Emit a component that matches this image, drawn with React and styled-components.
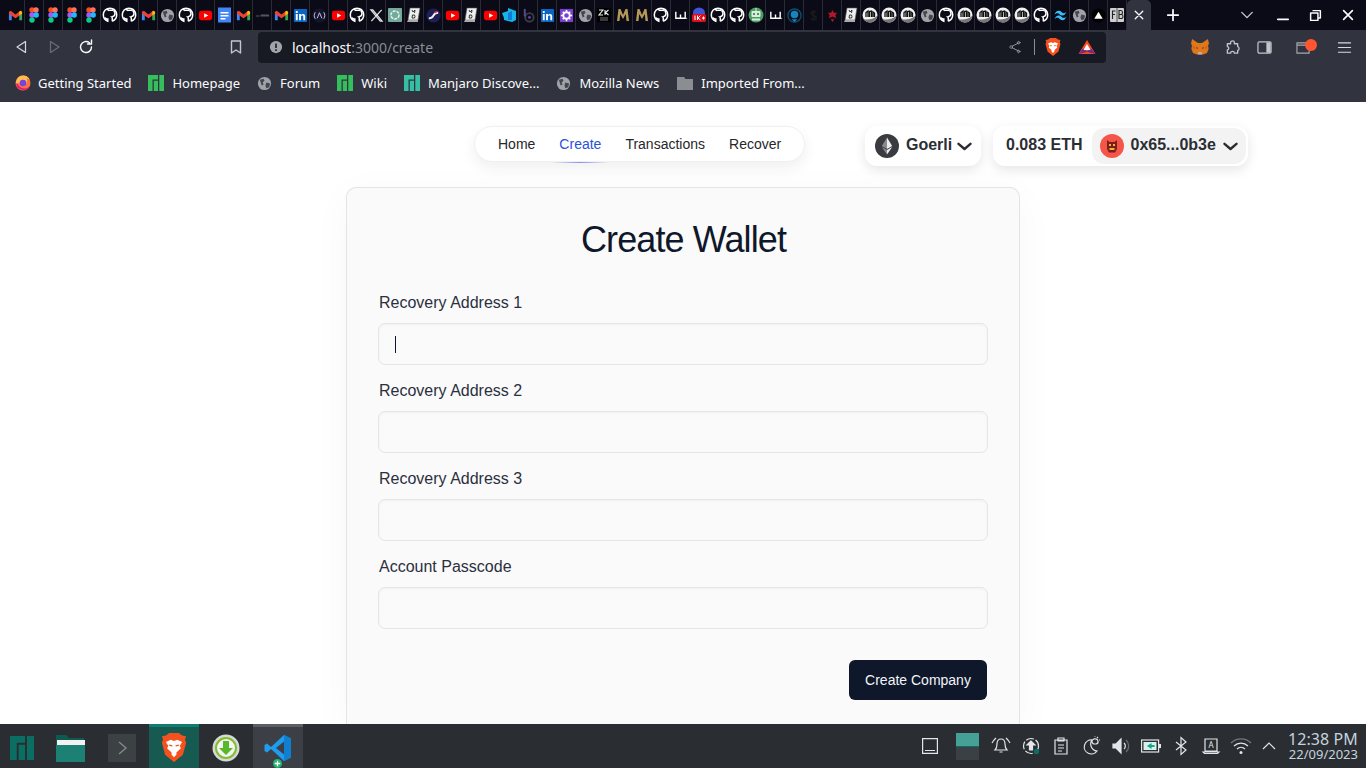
import React from 'react';
import styled, { createGlobalStyle } from 'styled-components';

const GlobalStyle = createGlobalStyle`
html, body {
  margin: 0;
  padding: 0;
  height: 768px;
  overflow: hidden;
  background: #fff;
  font-family: "Liberation Sans", Arial, sans-serif;
}
* { box-sizing: border-box; }
`;

const Screen = styled.div`
width: 1366px;
height: 768px;
display: flex;
flex-direction: column;
overflow: hidden;
`;

/* ---------- browser chrome ---------- */
const TabStrip = styled.div`
height: 30px;
flex: none;
background: #0b0b18;
display: flex;
padding-left: 6px;
`;
const TabSlot = styled.div`
width: 19px;
height: 30px;
flex: none;
display: flex;
align-items: center;
justify-content: center;
border-right: 1px solid #2b2b36;
`;
const ActiveTab = styled.div`
width: 24px;
height: 30px;
flex: none;
background: #31343f;
border-radius: 5px 5px 0 0;
display: flex;
align-items: center;
justify-content: center;
`;
const WinButton = styled.div`
position: absolute;
top: 0;
left: ${(p) => p.$x}px;
width: 30px;
height: 30px;
display: flex;
align-items: center;
justify-content: center;
`;
const TabStripEnd = styled.div`
position: relative;
flex: 1;
`;
const Toolbar = styled.div`
height: 34px;
flex: none;
background: #31343f;
display: flex;
align-items: center;
padding-left: 6px;
`;
const ToolBtn = styled.div`
position: relative;
width: 32px;
height: 32px;
flex: none;
display: flex;
align-items: center;
justify-content: center;
margin-left: ${(p) => p.$ml || 0}px;
`;
const UrlBar = styled.div`
width: 848px;
height: 31px;
margin-left: 6px;
flex: none;
background: #171923;
border-radius: 4px;
display: flex;
align-items: center;
padding: 0 10px 0 11px;
font-family: "Noto Sans", sans-serif;
font-size: 14px;
color: #fbfbfe;
`;
const UrlText = styled.div`
margin-left: 9px;
flex: 1;
`;
const UrlPort = styled.span`
color: #8b8c94;
`;
const UrlDivider = styled.div`
width: 1px;
height: 16px;
background: #8b8c94;
margin: 0 10px 0 11px;
`;
const UrlIconGap = styled.div`
width: 17px;
`;
const Badge = styled.div`
position: absolute;
top: 8px;
right: 2px;
width: 12px;
height: 12px;
border-radius: 50%;
background: #ff5630;
`;
const BookmarkBar = styled.div`
height: 38px;
flex: none;
background: #31343f;
display: flex;
align-items: center;
padding-left: 15px;
gap: 17px;
font-family: "Noto Sans", sans-serif;
font-size: 13px;
color: #fbfbfe;
`;
const Bookmark = styled.div`
display: flex;
align-items: center;
gap: ${(p) => p.$gap}px;
white-space: nowrap;
`;

/* ---------- page ---------- */
const Page = styled.div`
flex: 1;
min-height: 0;
background: #fff;
overflow: hidden;
display: flex;
flex-direction: column;
`;
const Header = styled.div`
display: flex;
align-items: flex-start;
padding: 24px 0 0 474px;
height: 85px;
flex: none;
`;
const NavPill = styled.nav`
position: relative;
width: 331px;
height: 36px;
background: #fff;
border: 1px solid #f0f0f2;
border-radius: 18px;
box-shadow: 0 6px 14px rgba(39, 39, 42, 0.07);
display: flex;
align-items: center;
padding-left: 11px;
font-size: 14px;
`;
const NavItem = styled.a`
position: relative;
padding: 0 12px;
line-height: 36px;
color: ${(p) => (p.$active ? '#2b50d8' : '#27272a')};
&::after {
  content: ${(p) => (p.$active ? '""' : 'none')};
  position: absolute;
  left: 4px;
  right: 4px;
  bottom: -1px;
  height: 1px;
  background: linear-gradient(90deg, rgba(60, 90, 220, 0), rgba(60, 90, 220, 0.6), rgba(60, 90, 220, 0));
}
`;
const Chip = styled.div`
height: 40px;
margin-left: ${(p) => p.$ml}px;
width: ${(p) => p.$w}px;
padding-left: ${(p) => p.$pl || 0}px;
background: #fff;
border-radius: 12px;
box-shadow: 0 4px 12px rgba(0, 0, 0, 0.1);
display: flex;
align-items: center;
font-size: 16px;
font-weight: 700;
color: #2a2e33;
white-space: nowrap;
`;
const ChainName = styled.span`
margin: 0 0 2px 7px;
`;
const Balance = styled.span`
margin: 0 0 2px 13px;
`;
const AccountBox = styled.div`
margin-left: 10px;
width: 154px;
height: 36px;
border-radius: 12px;
background: #f3f3f4;
display: flex;
align-items: center;
padding-left: 8px;
`;
const AccountName = styled.span`
margin: 0 0 2px 6px;
`;
const CaretWrap = styled.span`
margin-left: ${(p) => p.$ml}px;
flex: none;
`;

const Card = styled.div`
width: 674px;
flex: 1;
margin-left: 346px;
background: #fafafa;
border: 1px solid #e4e4e7;
border-bottom: none;
border-radius: 10px 10px 0 0;
box-shadow: 0 8px 40px rgba(0, 0, 0, 0.035);
padding: 30px 31px 0 32px;
`;
const Title = styled.h1`
margin: 0 0 28px;
height: 44px;
line-height: 44px;
text-align: center;
font-size: 36px;
font-weight: 400;
letter-spacing: -0.9px;
color: #0f172a;
`;
const Field = styled.div`
height: 88px;
`;
const Label = styled.label`
display: block;
height: 28px;
line-height: 26px;
margin-bottom: 5px;
font-size: 16px;
color: #2a3040;
`;
const InputBox = styled.div`
height: 42px;
width: 610px;
margin-left: -1px;
background: #fafafa;
border: 1px solid #e6e6e8;
border-radius: 7px;
box-shadow: inset 0 1px 3px rgba(0, 0, 0, 0.04);
display: flex;
align-items: center;
padding-left: 16px;
`;
const TextCaret = styled.div`
width: 1px;
height: 17px;
background: #0f172a;
`;
const Actions = styled.div`
display: flex;
justify-content: flex-end;
margin: 18px 1px 0 0;
`;
const SubmitButton = styled.button`
width: 138px;
height: 40px;
border: none;
border-radius: 6px;
background: #0f172a;
color: #f1f5f9;
font-family: "Liberation Sans", Arial, sans-serif;
font-size: 14px;
`;

/* ---------- taskbar ---------- */
const Taskbar = styled.div`
height: 44px;
flex: none;
background: #2a2e32;
display: flex;
align-items: stretch;
`;
const TaskItem = styled.div`
width: 50px;
flex: none;
margin-left: ${(p) => p.$ml || 0}px;
display: flex;
align-items: center;
justify-content: center;
background: ${(p) => p.$bg || 'transparent'};
border-top: 3px solid ${(p) => p.$bar || 'transparent'};
`;
const LaunchIcon = styled.div`
position: relative;
width: 28px;
height: 28px;
`;
const AddBadge = styled.div`
position: absolute;
left: 9px;
bottom: -6px;
`;
const Tray = styled.div`
margin-left: auto;
display: flex;
align-items: center;
`;
const TrayItem = styled.div`
width: ${(p) => p.$w || 30}px;
height: 44px;
display: flex;
align-items: center;
justify-content: center;
`;
const Pager = styled.div`
width: 23px;
height: 27px;
margin: 0 7px 0 16px;
display: flex;
flex-direction: column;
`;
const PagerDesk = styled.div`
flex: 1;
background: ${(p) => (p.$on ? '#45a095' : '#3b4045')};
border-bottom: ${(p) => (p.$on ? '1px solid #0d6e62' : 'none')};
`;
const Clock = styled.div`
width: 72px;
margin-left: 4px;
margin-right: 8px;
font-family: "Noto Sans", sans-serif;
color: #c5d3df;
text-align: right;
`;
const ClockTime = styled.div`
font-size: 16px;
line-height: 16px;
letter-spacing: 0.1px;
`;
const ClockDate = styled.div`
font-size: 13px;
line-height: 13px;
margin-top: 1px;
`;

/* ---------- drawings ---------- */
const Svg = ({ s = 16, w, h, vb = '0 0 16 16', children }) => (
  <svg width={w || s} height={h || s} viewBox={vb} style={{ display: 'block', flex: 'none' }}>{children}</svg>
);

const favicons = {
  gmail: () => (
    <Svg s={15}>
      <path d="M1 4v9h3V7z" fill="#4285f4" /><path d="M15 4v9h-3V7z" fill="#34a853" />
      <path d="M1 4l2-1 5 4 5-4 2 1v2L8 11 1 6z" fill="#ea4335" /><path d="M13 3l2 1v2l-3 2V4z" fill="#fbbc04" />
    </Svg>
  ),
  figma: () => (
    <Svg s={16}>
      <circle cx="6" cy="3" r="2.7" fill="#f24e1e" /><circle cx="10" cy="3" r="2.7" fill="#ff7262" />
      <circle cx="6" cy="8" r="2.7" fill="#a259ff" /><circle cx="10.2" cy="8" r="2.7" fill="#1abcfe" />
      <circle cx="6" cy="13" r="2.7" fill="#0acf83" />
    </Svg>
  ),
  github: () => (
    <Svg s={16}>
      <path d="M8 1.2C4.2 1.2 1.3 4 1.3 7.8c0 3 1.8 5.400 4.500 6.400V12c-1.600.2-2.300-.5-2.800-1.500M10.300 14.200V11.400c0-1-.6-1.500-.6-1.500 2-.3 3.300-1.300 3.300-3.300 0-.9-.3-1.500-.8-2.100.2-.6.1-1.300-.1-1.900-.8 0-1.400.4-1.900.8-1.100-.3-2.300-.3-3.400 0-.5-.4-1.100-.8-1.900-.8" fill="none" stroke="#fff" strokeWidth="1.500" />
      <path d="M10.300 14.200c2.700-1 4.400-3.400 4.400-6.400 0-3.800-2.900-6.600-6.700-6.600" fill="none" stroke="#fff" strokeWidth="1.500" />
    </Svg>
  ),
  globe: () => (
    <Svg s={15}>
      <circle cx="8" cy="8" r="7" fill="#a0a3a8" />
      <path d="M3 4l4-1 1 2-2 2 1 2-2 1zM10 7l4 1-1 4-3 1-1-3z" fill="#43464e" />
    </Svg>
  ),
  youtube: () => (
    <Svg s={15}>
      <rect x="1" y="3" width="14" height="10" rx="2.500" fill="#f00" /><path d="M6.500 5.500v5L11 8z" fill="#fff" />
    </Svg>
  ),
  docs: () => (
    <Svg s={16}>
      <rect x="2" y="0.500" width="13" height="15" fill="#4285f4" />
      <path d="M4.500 5h8v1.500h-8zM4.500 8h8v1.500h-8zM4.500 11h5v1.500h-5z" fill="#fff" />
    </Svg>
  ),
  dash: () => <Svg s={15}><path d="M1 8h4v1H1zM6 7h9v2H6z" fill="#55565c" /></Svg>,
  linkedin: () => (
    <Svg s={15}>
      <rect x="1" y="1" width="14" height="14" rx="1" fill="#0a66c2" />
      <path d="M3 6.500h2V13H3zM3 3.200h2v2H3zM6.500 6.500h2v1c.5-.8 1.300-1.200 2.200-1.200 1.700 0 2.300 1.100 2.300 2.800V13h-2V9.500c0-.9-.3-1.400-1.100-1.400-.9 0-1.400.6-1.400 1.500V13h-2z" fill="#fff" />
    </Svg>
  ),
  arc: () => (
    <Svg s={15}>
      <circle cx="8" cy="8" r="7.500" fill="#14152c" />
      <path d="M5.500 11L8 5l2.500 6M3.500 4.500C2 7 2 9 3.500 11.500M12.500 4.500C14 7 14 9 12.500 11.500" fill="none" stroke="#c6c8e0" strokeWidth="1" />
    </Svg>
  ),
  x: () => <Svg s={15}><path d="M2 2l10 12h2L4 2zM13.500 2L2.500 14" fill="none" stroke="#e5e5e5" strokeWidth="1.300" /></Svg>,
  chatgpt: () => (
    <Svg s={16}>
      <rect x="1" y="1" width="14" height="14" rx="1" fill="#74aa9c" />
      <circle cx="8" cy="8" r="4" fill="none" stroke="#e8f3f0" strokeWidth="1.500" strokeDasharray="3 1" />
    </Svg>
  ),
  md: () => (
    <Svg s={16}>
      <path d="M4 1h10l-2 12H2z" fill="#eee" stroke="#555" strokeWidth=".6" /><path d="M2 13h10v2H1z" fill="#aaa" />
      <path d="M6 3l1 2 2-2-.5 3M6.500 8h2l.5 1.500-.5 1.500h-2.500z" fill="none" stroke="#222" strokeWidth=".9" />
    </Svg>
  ),
  swirl: () => (
    <Svg s={15}>
      <circle cx="8" cy="8" r="7.500" fill="#1d1f55" />
      <path d="M3 11c3 0 4-1 5-3s3-3 5-3" fill="none" stroke="#f2f2f2" strokeWidth="2" />
      <path d="M9 5c1-1 2-1 3-1" stroke="#e33" strokeWidth="1.500" fill="none" />
    </Svg>
  ),
  azure: () => (
    <Svg s={16}>
      <path d="M1 6l6-2V1l8 3v9l-4 2-8-2v-2z" fill="#19b5e8" /><path d="M7 6l4-2v9l-4 0z" fill="#0f7dd6" />
    </Svg>
  ),
  bcircle: () => (
    <Svg s={15}>
      <circle cx="9" cy="10" r="4.500" fill="none" stroke="#3c3d49" strokeWidth="2" />
      <path d="M4 1v8" stroke="#5b4a98" strokeWidth="2" /><circle cx="9" cy="10" r="1.500" fill="#5b4a98" />
    </Svg>
  ),
  gear: () => (
    <Svg s={15}>
      <rect x="1" y="1" width="14" height="14" fill="#7a3fd0" />
      <circle cx="8" cy="8" r="3.500" fill="none" stroke="#fff" strokeWidth="2" />
      <path d="M8 2v2M8 12v2M2 8h2M12 8h2M4 4l1.500 1.500M12 4l-1.500 1.500M4 12l1.500-1.500M12 12l-1.500-1.500" stroke="#fff" strokeWidth="1.600" />
    </Svg>
  ),
  zk: () => (
    <Svg s={16}>
      <rect x="1" y="1" width="14" height="14" fill="#000" />
      <path d="M3 3h4L3 8h4M9 3v5M12.500 3L9.500 5.500 12.500 8" fill="none" stroke="#eee" strokeWidth="1.100" />
      <path d="M4 11h8M4 13h8" stroke="#777" strokeWidth="1" />
    </Svg>
  ),
  goldm: () => (
    <Svg s={16}>
      <path d="M2 14L3.500 2h2L8 8l2.500-6h2L14 14h-2.500l-.7-7L8 12 5.200 7l-.7 7z" fill="#b59a57" />
    </Svg>
  ),
  shh: () => <Svg s={15}><path d="M3 4v7h10V4M8 7v4" fill="none" stroke="#fff" strokeWidth="1.500" /><path d="M14.500 10.500v1" stroke="#fff" strokeWidth="1" /></Svg>,
  onek: () => (
    <Svg s={16}>
      <path d="M2 6a6 5.500 0 0 1 12 0v1H2z" fill="#4353d8" />
      <rect x="1" y="7" width="14" height="8" rx="1.500" fill="#d8101c" />
      <path d="M4 8.500V13M6.500 8.500V13M9.500 8.500L7 11l2.500 2M11 11h3M12.500 9.500v3" stroke="#fff" strokeWidth="1" fill="none" />
    </Svg>
  ),
  robot: () => (
    <Svg s={16}>
      <circle cx="8" cy="8" r="7.500" fill="#4b9e62" />
      <rect x="3.500" y="4" width="9" height="6" rx="1" fill="#d9efdc" />
      <circle cx="6" cy="7" r="1" fill="#2c6b3e" /><circle cx="10" cy="7" r="1" fill="#2c6b3e" />
      <path d="M4 11.500h8v2H4z" fill="#d9efdc" /><path d="M8 1v3" stroke="#d9efdc" />
    </Svg>
  ),
  agent: () => (
    <Svg s={15}>
      <circle cx="8" cy="8" r="7" fill="none" stroke="#0d4d70" strokeWidth="1.500" />
      <circle cx="8" cy="7" r="4" fill="#1386bd" /><path d="M5 12l3 3 3-3z" fill="#1386bd" />
    </Svg>
  ),
  dollar: () => <Svg s={15}><path d="M11 4.500C10 3.500 5.500 3 5.500 5.500S11 8 11 10.500 6 12.500 5 11.500M8 2v12" fill="none" stroke="#1a1a1a" strokeWidth="1.700" /></Svg>,
  redstar: () => <Svg s={15}><path d="M8 2l1.500 3H13l-2 2.500L12 11 8 9l-4 2 1-3.500L3 5h3.500zM6 12h4l-2 3z" fill="#b3172c" /></Svg>,
  mcircle: () => (
    <Svg s={16}>
      <circle cx="8" cy="8" r="7.500" fill="#f2f2f2" />
      <path d="M1 12c4 1 9 1 14-3v2a8 8 0 0 1-13 2z" fill="#777" />
      <path d="M4 10V5.500L6 4v6M7.500 10V4.500L9.500 4v6M11 10V5l1.500 1v4" fill="none" stroke="#111" strokeWidth="1.300" />
    </Svg>
  ),
  tailwind: () => (
    <Svg s={15}>
      <path d="M1.500 7.500C2.500 4.500 4 3 6 3c3 0 3 2.500 5.500 2.500 1.300 0 2.300-.7 3-2-1 3-2.500 4.500-4.500 4.500C7 8 7 5.500 4.500 5.500c-1.300 0-2.300.7-3 2z" fill="#38bdf8" />
      <path d="M1.500 12.500C2.500 9.500 4 8 6 8c3 0 3 2.500 5.500 2.500 1.300 0 2.300-.7 3-2-1 3-2.500 4.500-4.500 4.500-3 0-3-2.500-5.500-2.500-1.300 0-2.300.7-3 2z" fill="#38bdf8" />
    </Svg>
  ),
  triangle: () => (
    <Svg s={15}>
      <circle cx="8" cy="8" r="7.500" fill="#000" /><path d="M8 4l4.500 7.500h-9z" fill="#fff" />
    </Svg>
  ),
  fb: () => (
    <Svg s={16}>
      <rect x="1" y="1" width="14" height="14" rx="1" fill="#cfcfcf" />
      <path d="M8 1v14" stroke="#555" />
      <path d="M6.500 4H3.500v8M3.500 7.500h2.500M10 3.500v8h2.500a1.500 2 0 0 0 0-4H10h2a1.500 2 0 0 0 0-4z" fill="none" stroke="#222" strokeWidth="1.100" />
    </Svg>
  ),
};

const tabIcons = [
  'gmail', 'figma', 'figma', 'figma', 'figma', 'github', 'github', 'gmail', 'globe', 'github',
  'youtube', 'docs', 'gmail', 'dash', 'gmail', 'linkedin', 'arc', 'youtube', 'github', 'x',
  'chatgpt', 'md', 'swirl', 'youtube', 'md', 'youtube', 'azure', 'bcircle', 'linkedin', 'gear',
  'globe', 'zk', 'goldm', 'goldm', 'github', 'shh', 'onek', 'github', 'github', 'robot',
  'shh', 'agent', 'dollar', 'redstar', 'md', 'mcircle', 'mcircle', 'mcircle', 'globe', 'github',
  'mcircle', 'mcircle', 'mcircle', 'mcircle', 'github', 'tailwind', 'globe', 'triangle', 'fb',
];

const ManjaroMark = ({ s = 16, color = '#35bf5c' }) => (
  <Svg s={s}>
    <path d="M0 0h10v4.500H4.500V16H0zM5.800 5.800H10V16H5.800zM11.300 0H16v16h-4.700z" fill={color} />
  </Svg>
);

const FirefoxIcon = () => (
  <Svg s={16}>
    <circle cx="8" cy="8" r="7.500" fill="#ff7139" />
    <path d="M8 .5a7.500 7.500 0 0 1 7 5c-1-1.500-2.500-2-3.500-2C13 6 12 10 8.500 10.500 6 10.800 4.500 9 4.500 7.500c-1 1-3 1-3.500 1C1 4 4 .5 8 .5z" fill="#ffbd4f" />
    <circle cx="8" cy="8" r="3.300" fill="#7542e5" />
    <path d="M1 8.500a7.500 7.500 0 0 0 14 2.500c-2 2-5 3-8 2s-4-3-4-4z" fill="#e31587" />
  </Svg>
);

const BraveLion = ({ s = 18 }) => (
  <Svg w={s} h={s * 1.12} vb="0 0 16 18">
    <path d="M3 1.500L5 0h6l2 1.500 2.500.5-.7 2 .7 2-2 7.500L8 18l-5.500-4.500L.5 6l.7-2L.5 2z" fill="#f4511e" />
    <path d="M3 5.500l3-1.300L8 5l2-.8 3 1.300-1.500 2.500.8 1.500L9.500 12v1.500L8 15l-1.500-1.500V12L3.700 9.500l.8-1.500z" fill="#fff" />
    <path d="M5 7.500l2 .5M11 7.500l-2 .5" stroke="#f4511e" strokeWidth=".8" />
  </Svg>
);

const BatIcon = () => (
  <Svg w={18} h={16} vb="0 0 18 16">
    <path d="M9 1l8.500 14H.5z" fill="#ff4724" /><path d="M.5 15L5 9.500l4 3 4-3 4.500 5.500L9 13z" fill="#662d91" />
    <path d="M9 5l3.500 6h-7z" fill="#fff" />
  </Svg>
);

const FoxIcon = () => (
  <Svg w={18} h={16} vb="0 0 18 16">
    <path d="M1 0l6 4h4l6-4 1 5-1 1 .6 4-1.600 4-4 1.500H6L2 14 .4 10 1 6 0 5z" fill="#e2761b" />
    <path d="M5 8l2 1-1 1zM13 8l-2 1 1 1z" fill="#233447" />
    <path d="M7 13h4v2.500H7z" fill="#c0ad9e" /><path d="M1 6l3 2-1 3zM17 6l-3 2 1 3z" fill="#cd6116" />
  </Svg>
);

const EthBadge = () => (
  <Svg s={24} vb="0 0 24 24">
    <circle cx="12" cy="12" r="12" fill="#3a3b40" />
    <path d="M12 3.500L6.800 12 12 15V3.500z" fill="#8a8a8f" /><path d="M12 3.500L17.200 12 12 15z" fill="#ededed" />
    <path d="M12 16l-5.200-3L12 20.500z" fill="#8a8a8f" /><path d="M12 16l5.200-3L12 20.500z" fill="#ededed" />
  </Svg>
);

const AvatarBadge = () => (
  <Svg s={24} vb="0 0 24 24">
    <circle cx="12" cy="12" r="12" fill="#f4574a" />
    <path d="M7 6l2.500 2h5L17 6v9l-2 3.500H9L7 15z" fill="#7d1f18" />
    <path d="M9 10h2v2H9zM13 10h2v2h-2zM9.500 14h5v2h-5z" fill="#f0b23e" />
  </Svg>
);

const WideCaret = ({ ml }) => (
  <CaretWrap $ml={ml}>
    <Svg w={15} h={9} vb="0 0 15 9"><path d="M1.500 1.800L7.500 7l6-5.200" fill="none" stroke="#2a2e33" strokeWidth="2.400" strokeLinecap="round" strokeLinejoin="round" /></Svg>
  </CaretWrap>
);

const Line = ({ d, color = '#fbfbfe', s = 16, w = 1.4 }) => (
  <Svg s={s}><path d={d} fill="none" stroke={color} strokeWidth={w} strokeLinecap="round" strokeLinejoin="round" /></Svg>
);

const trayColor = '#e3e6e8';
const TrayLine = ({ children, w = 20, h = 20, vb = '0 0 20 20' }) => (
  <svg width={w} height={h} viewBox={vb} fill="none" stroke={trayColor} strokeWidth="1.200" style={{ display: 'block' }}>{children}</svg>
);

const bookmarks = [
  { icon: <FirefoxIcon />, name: 'Getting Started', gap: 7 },
  { icon: <ManjaroMark />, name: 'Homepage', gap: 8 },
  { icon: favicons.globe(), name: 'Forum', gap: 8 },
  { icon: <ManjaroMark />, name: 'Wiki', gap: 8 },
  { icon: <ManjaroMark color="#35bfa4" />, name: 'Manjaro Discove...', gap: 8 },
  { icon: favicons.globe(), name: 'Mozilla News', gap: 8 },
  {
    icon: <Svg w={18} h={16}><path d="M0 2h7l1.500 2H16v11H0z" fill="#8c8d92" /></Svg>,
    name: 'Imported From...',
    gap: 7,
  },
];

const fields = ['Recovery Address 1', 'Recovery Address 2', 'Recovery Address 3', 'Account Passcode'];

const App = () => {
  return (
    <Screen>
      <GlobalStyle />
      <TabStrip>
        {tabIcons.map((name, i) => (
          <TabSlot key={i}>{favicons[name]()}</TabSlot>
        ))}
        <ActiveTab><Line s={12} d="M3 3l10 10M13 3L3 13" w={1.8} /></ActiveTab>
        <TabStripEnd>
          <WinButton $x={7}><Line s={14} d="M8 2v12M2 8h12" w={2} /></WinButton>
          <WinButton $x={81}><Line s={14} d="M2 5l6 6 6-6" w={1.6} color="#c9cad0" /></WinButton>
          <WinButton $x={117}><Line s={14} d="M2 13h12" w={1.8} /></WinButton>
          <WinButton $x={149}><Line s={13} d="M5 2h9v9h-3M2 5h9v9H2z" w={1.8} /></WinButton>
          <WinButton $x={182}><Line s={14} d="M3 3l10 10M13 3L3 13" w={1.9} /></WinButton>
        </TabStripEnd>
      </TabStrip>

      <Toolbar>
        <ToolBtn><Line d="M11.500 2.500v11L3 8z" w={1.2} color="#d8d9de" /></ToolBtn>
        <ToolBtn><Line d="M4.500 2.500v11L13 8z" color="#6b6d76" w={1.2} /></ToolBtn>
        <ToolBtn><Line d="M13.500 8A5.500 5.500 0 1 1 11.500 3.800M9.500 5h4V1" /></ToolBtn>
        <ToolBtn $ml={118}><Line d="M3.500 2h9v12L8 11l-4.500 3z" color="#c5c6cc" /></ToolBtn>
        <UrlBar>
          <Svg s={14}><circle cx="8" cy="8" r="7" fill="#a3a4aa" /><path d="M8 4v5M8 10.500v2" stroke="#171923" strokeWidth="1.800" /></Svg>
          <UrlText>localhost<UrlPort>:3000/create</UrlPort></UrlText>
          <Line s={14} color="#a3a4aa" w={1} d="M12.500 3a1.500 1.500 0 1 0 0 .1zM4 8a1.500 1.500 0 1 0 0 .1zM12.500 13a1.500 1.500 0 1 0 0 .1zM3.800 7l7-3.500M3.800 9l7 3.500" />
          <UrlDivider />
          <BraveLion s={16} />
          <UrlIconGap />
          <BatIcon />
        </UrlBar>
        <ToolBtn $ml={78}><FoxIcon /></ToolBtn>
        <ToolBtn><Line s={15} color="#c5c6cc" d="M6 2.500c0-2 4-2 4 0V4h3.500v3c2 0 2 4 0 4v3H10c0-2.500-4-2.500-4 0H2.500v-3.500c2 0 2-3.500 0-3.500V4H6z" /></ToolBtn>
        <ToolBtn>
          <Svg s={15}><rect x="1" y="2" width="14" height="12" rx="1.500" fill="none" stroke="#c5c6cc" strokeWidth="1.300" /><rect x="10" y="2.500" width="4.500" height="11" fill="#c5c6cc" /></Svg>
        </ToolBtn>
        <ToolBtn $ml={7}>
          <Svg s={15}><path d="M1 3h13v11H1zM1 5.500h13" fill="none" stroke="#a8a9b0" strokeWidth="1.200" /></Svg>
          <Badge />
        </ToolBtn>
        <ToolBtn $ml={9}><Line s={15} d="M1.500 3h13M1.500 8h13M1.500 13h13" w={1.2} color="#d8d9de" /></ToolBtn>
      </Toolbar>

      <BookmarkBar>
        {bookmarks.map((b) => (
          <Bookmark key={b.name} $gap={b.gap}>{b.icon}{b.name}</Bookmark>
        ))}
      </BookmarkBar>

      <Page>
        <Header>
          <NavPill>
            <NavItem>Home</NavItem>
            <NavItem $active>Create</NavItem>
            <NavItem>Transactions</NavItem>
            <NavItem>Recover</NavItem>
          </NavPill>
          <Chip $ml={60} $w={116} $pl={10}>
            <EthBadge />
            <ChainName>Goerli</ChainName>
            <WideCaret ml={5} />
          </Chip>
          <Chip $ml={12} $w={255}>
            <Balance>0.083 ETH</Balance>
            <AccountBox>
              <AvatarBadge />
              <AccountName>0x65...0b3e</AccountName>
              <WideCaret ml={7} />
            </AccountBox>
          </Chip>
        </Header>
        <Card>
          <Title>Create Wallet</Title>
          {fields.map((f, i) => (
            <Field key={f}>
              <Label>{f}</Label>
              <InputBox>{i === 0 && <TextCaret />}</InputBox>
            </Field>
          ))}
          <Actions>
            <SubmitButton>Create Company</SubmitButton>
          </Actions>
        </Card>
      </Page>

      <Taskbar>
        <TaskItem $ml={-3}><ManjaroMark s={24} color="#0b6e62" /></TaskItem>
        <TaskItem $ml={-2}>
          <Svg w={30} h={28} vb="0 0 30 28">
            <path d="M1 1h10l3 3h15v24H1z" fill="#0c5a52" /><rect x="2" y="6" width="28" height="5" fill="#f2f2f2" />
            <path d="M1 11h29v17H1z" fill="#1c8074" />
          </Svg>
        </TaskItem>
        <TaskItem $ml={2}>
          <Svg w={28} h={28} vb="0 0 28 28">
            <rect width="28" height="28" fill="#3c4144" />
            <path d="M11 8l7 6-7 6" fill="none" stroke="#80878a" strokeWidth="1.500" />
          </Svg>
        </TaskItem>
        <TaskItem $ml={2} $bg="#165a52" $bar="#0f7d70"><BraveLion s={26} /></TaskItem>
        <TaskItem $ml={2}>
          <Svg s={28} vb="0 0 28 28">
            <circle cx="14" cy="14" r="13.500" fill="#d8d8d8" /><circle cx="14" cy="14" r="10" fill="#f4f4f4" stroke="#7fbf2a" strokeWidth="2" />
            <path d="M11 7h6v7h4l-7 7-7-7h4z" fill="#59b82a" />
          </Svg>
        </TaskItem>
        <TaskItem $ml={2} $bg="#3c4046" $bar="#5b5f64">
          <LaunchIcon>
            <Svg s={28} vb="0 0 28 28">
              <path d="M20 1l7 3.500v19L20 27 7 15l-4 3.500L.5 17v-6L3 9.500 7 13z" fill="#1f9cf0" />
              <path d="M20 7.500L12 14l8 6.500z" fill="#3c4046" />
              <path d="M20 1l7 3.500v19L20 27z" fill="#0f7fd0" />
            </Svg>
            <AddBadge>
              <Svg s={9} vb="0 0 10 10">
                <circle cx="5" cy="5" r="5" fill="#22b573" /><path d="M5 2v6M2 5h6" stroke="#fff" strokeWidth="1.400" />
              </Svg>
            </AddBadge>
          </LaunchIcon>
        </TaskItem>
        <Tray>
          <TrayItem $w={20}>
            <TrayLine w={16} h={16} vb="0 0 16 16"><path d="M.6.6h14.800v14.800H.6zM3 12.500h10" /></TrayLine>
          </TrayItem>
          <Pager><PagerDesk $on /><PagerDesk /></Pager>
          <TrayItem>
            <TrayLine><path d="M10 3c-3 0-4 2-4 5 0 3-1 5-2 6h12c-1-1-2-3-2-6 0-3-1-5-4-5zM8.500 16h3M3 4L1 7M17 4l2 3M5 2L3 4M15 2l2 2" /></TrayLine>
          </TrayItem>
          <TrayItem>
            <TrayLine>
              <circle cx="10" cy="10" r="7.500" strokeDasharray="8 2" />
              <path d="M10 5l-4 4h2.500v5h3V9H14z" fill={trayColor} />
              <circle cx="15.500" cy="15.500" r="2.700" fill="#0b6e62" stroke="none" />
            </TrayLine>
          </TrayItem>
          <TrayItem>
            <TrayLine><path d="M4 4h12v14H4zM7 2h6v3H7zM7 9h6M7 12h6M7 15h4" /></TrayLine>
          </TrayItem>
          <TrayItem>
            <TrayLine><path d="M11 4a7 7 0 1 0 5 11 7 7 0 0 1-5-11zM14 3a2.500 2.500 0 0 0-1 5h2a2.500 2.500 0 0 0-1-5zM14 .5V1M18 4h1M17 1l-1 1" /></TrayLine>
          </TrayItem>
          <TrayItem>
            <TrayLine>
              <path d="M2 8h3l5-5v14l-5-5H2z" fill={trayColor} />
              <path d="M13 7a4 4 0 0 1 0 6" />
              <path d="M15 4a8 8 0 0 1 0 12" stroke="#6c7074" />
            </TrayLine>
          </TrayItem>
          <TrayItem>
            <TrayLine w={20} h={14} vb="0 0 20 14">
              <rect x=".6" y="1" width="17" height="12" />
              <rect x="2.500" y="3" width="13" height="8" fill="#d7f2ec" stroke="none" />
              <path d="M18 5h2v4h-2z" fill={trayColor} stroke="none" />
              <path d="M7 7l3-2v1.500h3v1h-3V9z" fill="#14a58e" stroke="#14a58e" />
            </TrayLine>
          </TrayItem>
          <TrayItem>
            <TrayLine><path d="M5 6l10 8-5 4.500V1.500l5 4.500-10 8" /></TrayLine>
          </TrayItem>
          <TrayItem>
            <TrayLine>
              <path d="M4 3h12v12H4zM2 16h16l-1.500 1.500h-13z" />
              <text x="10" y="12" fontSize="8" fontFamily="Noto Sans, sans-serif" textAnchor="middle" fill={trayColor} stroke="none">A</text>
            </TrayLine>
          </TrayItem>
          <TrayItem>
            <TrayLine w={22} h={18} vb="0 0 22 18">
              <path d="M1 6a14 14 0 0 1 20 0" stroke="#73787c" />
              <path d="M4 9a10 10 0 0 1 14 0M7 12a6 6 0 0 1 8 0" />
              <circle cx="11" cy="15.500" r="1.500" fill={trayColor} stroke="none" />
            </TrayLine>
          </TrayItem>
          <TrayItem $w={26}>
            <TrayLine w={14} h={14} vb="0 0 14 14"><path d="M1 10l6-6 6 6" /></TrayLine>
          </TrayItem>
          <Clock>
            <ClockTime>12:38 PM</ClockTime>
            <ClockDate>22/09/2023</ClockDate>
          </Clock>
        </Tray>
      </Taskbar>
    </Screen>
  );
};

export default App;
